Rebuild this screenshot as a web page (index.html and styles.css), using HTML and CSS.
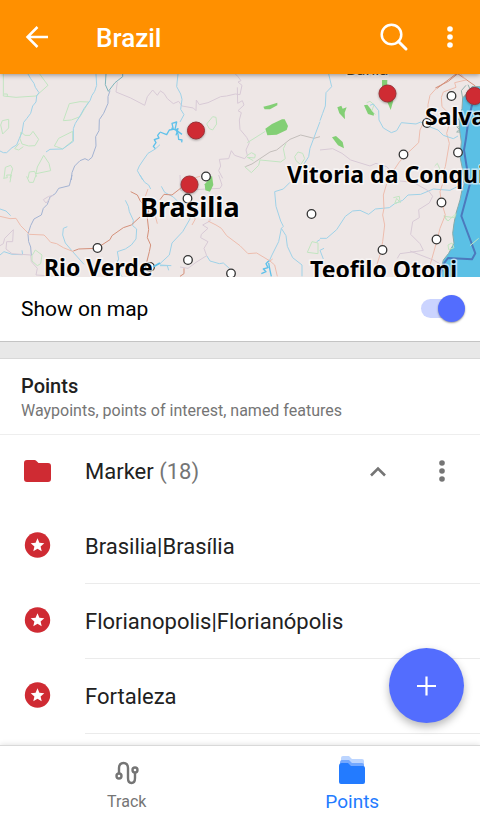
FILE: index.html
```html
<!DOCTYPE html>
<html lang="en">
<head>
<meta charset="utf-8">
<meta name="viewport" content="width=device-width, initial-scale=1">
<title>Brazil</title>
<link rel="stylesheet" href="styles.css">
</head>
<body>
<header class="appbar">
  <button class="icon-button" aria-label="Back">
    <svg width="24" height="24" viewBox="0 0 24 24" fill="none" stroke="currentColor" stroke-width="2.500"><path d="M23 12H3M12.500 2L2.500 12l10 10"/></svg>
  </button>
  <h1 class="title">Brazil</h1>
  <button class="icon-button" aria-label="Search">
    <svg width="30" height="30" viewBox="0 0 30 30" fill="none" stroke="currentColor" stroke-width="2.500"><circle cx="12.500" cy="12.500" r="9.800"/><path d="M19.500 19.500l7.500 7.500" stroke-width="3" stroke-linecap="round"/></svg>
  </button>
  <button class="icon-button" aria-label="More options">
    <svg width="8" height="24" viewBox="0 0 8 24" fill="currentColor"><circle cx="4" cy="4" r="2.800"/><circle cx="4" cy="12" r="2.800"/><circle cx="4" cy="20" r="2.800"/></svg>
  </button>
</header>
<main class="content">
  <div class="map">
    <svg class="map-canvas" viewBox="0 74 480 203" preserveAspectRatio="xMidYMid slice" role="img" aria-label="Map of Brazil">
      <g transform="translate(0 70) scale(.33333)" class="lines">
        <path class="park" d="M10 12V78L48 82 108 78 144 46 119 12M12 72H22V80M190 152L208 101 240 95 266 96 240 140 214 150ZM163 228L176 205 218 184V212L188 237 170 230ZM2 165L7 152 26 148V174L8 192ZM63 186L75 196 90 196 99 184 116 208 105 227 86 228 66 222 60 206ZM131 256L147 280 152 302 108 311 112 291ZM12 325L16 292 32 286 38 296 30 325M84 325L88 306 104 304 110 320M58 220L44 236 56 240 70 230"/>
        <path class="river" d="M84 12L92 26 102 40 106 52 117 68 110 78 108 96 98 108 92 130 80 146 71 157 66 188 58 205 50 225 36 233 20 248 10 248 0 243M288 12L290 46 284 64 276 76 270 92 252 116 240 138 226 160 220 176V214L188 237 150 238 138 246M480 224L466 237 444 250 430 270 418 288 412 302 428 330"/>
        <path class="lake" d="M480 187L473 196 477 204 463 209 468 218 460 229 466 236"/>
        <path class="river dark" d="M318 12L316 44 325 64 345 38 368 20V12"/>
        <path class="border-river" d="M330 62L324 80V100L311 130 298 149 297 182 287 200 288 228 276 262 265 271 255 266 240 272 224 288 216 308 214 330"/>
        <path class="border" d="M352 36L348 66 392 84 434 106 442 80 458 60 472 76 480 64"/>
      </g>
      <g transform="translate(160 70) scale(.33333)" class="lines">
        <path class="border" d="M0 62L12 70 22 86 40 101 56 94 66 108 100 114 108 122 109 90 118 104 144 98 182 80 200 78 226 72 240 74 246 46 234 36 243 32 234 20 226 12M232 52L233 100 247 92 252 105 234 122 244 128 238 150 240 178 260 202 268 218 258 240 262 256 254 266 224 256 214 242 206 266 178 268 182 288 176 302 188 325"/>
        <path class="border green-gray" d="M256 290L276 282 330 246 350 240 390 208 422 195 462 205 480 200"/>
        <path class="park" d="M140 162L158 140 168 142 170 162 158 180 148 176ZM316 184L262 218M378 220L370 236 376 266 362 276 300 270 296 286 274 308 254 290M404 260L414 246 428 250 434 266 422 284 408 272ZM260 258L274 248 286 254 284 264 262 262 280 272"/>
        <path class="river" d="M54 12L50 50 62 72 66 88 62 118 72 134 60 156M480 155L466 192 450 235 446 260 432 282"/>
        <path class="lake" d="M0 186L20 194 28 180 40 178 36 160 50 156 45 178 66 193M48 180L54 192 56 208 66 210 65 217M34 174L46 180 54 176 48 196"/>
        <path class="wood" d="M310 110L328 106 352 98V106L330 118H314ZM316 176L336 162 366 148 374 148 384 168 380 180 350 194 322 196Z"/>
      </g>
      <g transform="translate(320 70) scale(.33333)" class="lines">
        <path class="sea" d="M490 50L456 50 442 72 428 84 426 116 418 140 418 174 424 216 420 260 428 300 432 345 426 360 420 390 414 410 408 430 402 460 398 490 402 520 386 550 370 570 354 630H490Z"/>
        <path class="coast" d="M456 104L445 152 438 205 432 240 440 290 449 345 424 438 466 550 456 568 384 564 372 580 360 615"/>
        <path class="hatch" d="M438 46L424 62 428 84 440 70M428 140L414 148 426 156M422 170H410L418 178 410 186H420M444 44L452 62"/>
        <path class="wood" d="M186 30H202L201 60 220 92 212 120 203 98 186 50ZM52 112L64 107 68 116 80 112 74 128 75 148 58 130ZM132 106L142 104 148 112 162 130 161 137 144 132ZM36 202L48 198 68 216 72 235 54 226Z"/>
        <path class="park" d="M140 98L150 94 162 104 156 122 166 134M344 288L352 280 360 298 348 300"/>
        <path class="road strong" d="M480 2L426 10 408 12 350 56M406 6L466 48M412 12L385 34 346 54"/>
        <path class="road" d="M348 56L330 76 324 104 324 130 300 180 296 218 260 252 238 276 222 300M422 12L438 30 404 38 408 52 370 66 364 82 366 110 382 126 390 156 380 190 388 220 376 290 372 300"/>
        <path class="river" d="M26 12L35 50 18 68 16 108 8 130 0 152M150 106L160 102 176 122 177 150 190 174 214 188 230 182 244 158 288 162 302 156 322 168 354 180 370 196 400 206 414 198"/>
        <path class="border" d="M0 240L38 236 66 250 92 270 150 288 168 280 200 290 220 310"/>
      </g>
      <g transform="translate(0 175) scale(.33333)" class="lines">
        <path class="border-river" d="M216 0L208 32 176 40 166 56 150 66 142 88 130 100 124 120 102 132 92 152 84 178 86 200 92 216 94 242"/>
        <path class="river" d="M0 102L18 108 32 122M0 240L12 230 36 238 68 239 66 226M202 155L190 160 188 180 196 204 218 230 252 268M420 0L434 22 446 30 452 42M376 76L385 94 388 110 400 136 398 152 410 162 408 192 394 210 376 222 352 230 356 252 348 270 366 305"/>
        <path class="road" d="M0 124L30 131 48 130 62 152 88 178 132 180 138 186 152 202 170 206 190 218 220 230"/>
        <path class="road strong" d="M220 228L236 222 290 220 330 194 336 182 370 158 394 150 420 126M392 50L412 60 422 80 446 104 442 130 446 164 442 188 452 210 448 230 440 262"/>
        <path class="road" d="M444 42L436 64M464 116L472 146"/>
        <path class="border" d="M0 212L10 206 14 190 40 164 38 200 20 200 18 222 36 236 92 240 94 260 112 280 108 300 140 302M160 62L146 64 130 74 138 84 150 70"/>
        <path class="park" d="M10 10L22 8 20 0H34L30 22M80 4L88 22H100L108 0M96 242L106 225 126 240 122 266 112 272 96 258Z"/>
      </g>
      <g transform="translate(160 175) scale(.33333)" class="lines">
        <path class="river" d="M4 34L14 52 40 66 66 92M90 112V132L68 170 36 204 28 240 0 266M390 22L370 42 344 50 348 94 362 138 370 154 364 160 356 200 336 240 326 262M364 160L378 182 382 214 398 248 426 270V304M140 242L150 258 178 266 190 264 208 280M0 272H22L26 286M470 200L480 194"/>
        <path class="lake" d="M328 256L318 266 324 278 310 282 318 290 304 296M326 264L330 286 334 304"/>
        <path class="river" d="M0 270L34 272"/>
        <path class="border" d="M60 0L62 46 180 40 186 30 176 0M150 90V138L128 150 144 160 124 178 122 188 144 200 132 220 140 242 108 262 84 280 60 276"/>
        <path class="road" d="M144 138L168 150 184 160 200 182 240 212 264 236 290 234 330 258 344 270 352 304M84 14L120 4M330 258L338 252M110 104L100 124 106 132 96 150"/>
        <path class="road strong" d="M0 74L12 58 36 60 64 38M60 304L72 296V280"/>
        <path class="wood" d="M156 2L160 30 150 50 136 46 134 28Z"/>
        <path class="park" d="M442 232L456 200 474 204V236Z"/>
      </g>
      <g transform="translate(320 175) scale(.33333)" class="lines">
        <path class="river" d="M0 190L20 190 50 164 76 124 98 108 120 106 146 118 166 102 208 98 224 86 248 76 264 60 302 58 340 42 390 46 434 24M12 220L0 226 10 252"/>
        <path class="border" d="M240 18L280 22 326 48 338 64 328 84 296 104 298 128 278 140 272 178 300 206 310 226 270 232 240 236 232 250M270 228L340 255 366 270"/>
        <path class="park" d="M220 68L238 64 240 80 224 86 230 70 242 84M372 124L404 128 408 116 384 138ZM384 210L396 204 402 218 386 224ZM450 212L476 190M380 136L372 120"/>
        <path class="road" d="M200 26L190 60 192 100 188 120 194 150 188 200 180 240 164 290M370 20L360 50 364 80 376 120 360 160 350 200 336 250 330 270M390 0L374 28"/>
      </g>
      <g class="town">
        <circle cx="451.500" cy="96" r="4.300"/><circle cx="427" cy="123" r="4.300"/><circle cx="403.500" cy="154.500" r="4.300"/><circle cx="458" cy="152.500" r="4.300"/><circle cx="206" cy="176.500" r="4.300"/><circle cx="187.500" cy="198.500" r="4.300"/><circle cx="97.500" cy="248" r="4.300"/><circle cx="188" cy="260" r="4.300"/><circle cx="231" cy="273.500" r="4.300"/><circle cx="311.500" cy="214" r="4.300"/><circle cx="441.500" cy="202.500" r="4.300"/><circle cx="436.500" cy="239.500" r="4.300"/><circle cx="382.500" cy="250" r="4.300"/><circle cx="150" cy="267" r="4.300"/>
      </g>
      <path class="lake" fill="none" d="M153 267l7-4"/>
      <g class="pin">
        <circle cx="196" cy="130.500" r="8.500"/><circle cx="189.500" cy="184.500" r="8.500"/><circle cx="387.500" cy="93.500" r="8.500"/><circle cx="474.500" cy="96" r="8.500"/>
      </g>
      <text class="region" x="346" y="75">Bahia</text>
      <g class="city">
        <text x="425" y="125">Salvador</text>
        <text x="287" y="183">Vitoria da Conquista</text>
        <text class="capital" x="140" y="217">Brasilia</text>
        <text x="44" y="276">Rio Verde</text>
        <text x="310" y="278">Teofilo Otoni</text>
      </g>
    </svg>
  </div>
  <label class="toggle-row">
    <span>Show on map</span>
    <input class="switch" type="checkbox" role="switch" checked>
  </label>
  <section class="points">
    <div class="points-head">
      <h2 class="points-title">Points</h2>
      <p class="points-note">Waypoints, points of interest, named features</p>
    </div>
    <div class="group">
      <svg class="lead" width="27" height="22" viewBox="0 0 27 22" fill="#cf2b33"><path d="M3 0h7.500q1 0 1.700.7L14.500 3H24q3 0 3 3v13q0 3-3 3H3q-3 0-3-3V3q0-3 3-3z"/></svg>
      <span class="group-name">Marker <span class="count">(18)</span></span>
      <button class="group-button" aria-label="Collapse">
        <svg width="18" height="12" viewBox="0 0 18 12" fill="none" stroke="currentColor" stroke-width="2.600"><path d="M2 10.500l7-7 7 7"/></svg>
      </button>
      <button class="group-button" aria-label="Group options">
        <svg width="8" height="24" viewBox="0 0 8 24" fill="currentColor"><circle cx="4" cy="4" r="2.800"/><circle cx="4" cy="12" r="2.800"/><circle cx="4" cy="20" r="2.800"/></svg>
      </button>
    </div>
    <ul class="list">
      <li class="item">
        <svg class="lead" width="27" height="26" viewBox="0 0 27 26"><circle cx="13.500" cy="13" r="12.700" fill="#cf2b33"/><path fill="#fff" d="M13.500 6.200l1.900 4.600 4.900.4-3.700 3.200 1.100 4.800-4.200-2.500-4.200 2.500 1.100-4.800-3.700-3.200 4.900-.4z"/></svg>
        <span class="item-name">Brasilia|Brasília</span>
      </li>
      <li class="item">
        <svg class="lead" width="27" height="26" viewBox="0 0 27 26"><circle cx="13.500" cy="13" r="12.700" fill="#cf2b33"/><path fill="#fff" d="M13.500 6.200l1.900 4.600 4.900.4-3.700 3.200 1.100 4.800-4.200-2.500-4.200 2.500 1.100-4.800-3.700-3.200 4.900-.4z"/></svg>
        <span class="item-name">Florianopolis|Florianópolis</span>
      </li>
      <li class="item">
        <svg class="lead" width="27" height="26" viewBox="0 0 27 26"><circle cx="13.500" cy="13" r="12.700" fill="#cf2b33"/><path fill="#fff" d="M13.500 6.200l1.900 4.600 4.900.4-3.700 3.200 1.100 4.800-4.200-2.500-4.200 2.500 1.100-4.800-3.700-3.200 4.900-.4z"/></svg>
        <span class="item-name">Fortaleza</span>
      </li>
    </ul>
  </section>
  <button class="fab" aria-label="Add point">
    <svg width="20" height="20" viewBox="0 0 20 20" fill="none" stroke="currentColor" stroke-width="2.200"><path d="M9.500 .5v19M0 10h19"/></svg>
  </button>
</main>
<nav class="tabs">
  <a class="tab" href="#track">
    <svg width="24" height="24" viewBox="0 0 24 24" fill="none" stroke="currentColor" stroke-width="2.400"><path d="M4 12V7q0-5 4.500-5T13 7v10q0 5 3.500 5t3.500-5v-6"/><circle cx="4" cy="15" r="2.500"/><circle cx="20" cy="9" r="2.500"/></svg>
    <span>Track</span>
  </a>
  <a class="tab active" href="#points" aria-current="page">
    <svg width="28" height="30" viewBox="0 0 28 30"><path fill="#bcd5ff" d="M3 3q0-2 2-2h6l3 3h10q2 0 2 2v8H3z"/><path fill="#73a8ff" d="M2 8q0-3 2-3h7l3 3h10q2 0 2 2v6H2z"/><path fill="#237bff" d="M1 11q0-3 3-3h6l3 3h12q2 0 2 2v14q0 2-2 2H3q-2 0-2-2z"/></svg>
    <span>Points</span>
  </a>
</nav>
</body>
</html>
```
FILE: styles.css
```css
* { box-sizing: border-box; }

body {
  margin: 0;
  height: 100vh;
  display: flex;
  flex-direction: column;
  overflow: hidden;
  background: #fff;
  color: #212121;
  font-family: Roboto, "Liberation Sans", sans-serif;
  font-size: 22px;
}

h1, h2, p, ul { margin: 0; padding: 0; }

button {
  display: grid;
  place-items: center;
  padding: 0;
  border: 0;
  background: none;
  color: inherit;
}

.appbar {
  flex: none;
  position: relative;
  z-index: 1;
  display: flex;
  align-items: center;
  height: 74px;
  padding: 0 2px 0 9px;
  background: #ff9000;
  color: #fff;
  box-shadow: 0 1px 5px rgba(0, 0, 0, .4);
}

.icon-button { width: 56px; height: 56px; }
.appbar .title {
  flex: 1;
  padding: 2px 0 0 31px;
  font-size: 26px;
  font-weight: 500;
  line-height: 32px;
}

.content {
  position: relative;
  flex: 1;
  min-height: 0;
  display: flex;
  flex-direction: column;
}

.map { flex: none; height: 203px; background: #eee7e6; }
.map-canvas { display: block; width: 100%; height: 100%; }

.lines { fill: none; stroke-width: 3; stroke-linejoin: round; }
.river { stroke: #9fd2e8; }
.dark { stroke: #80b4bb; }
.border-river { stroke: #a3b3d2; }
.border { stroke: #d8cad6; }
.green-gray { stroke: #c3bebb; }
.park { stroke: #c2e5c1; }
.lake { stroke: #5fc1ea; stroke-width: 4; }
.map-canvas > .lake { stroke-width: 2; }
.road { stroke: #edbdae; }
.strong { stroke: #d49079; }
.wood { fill: #83cf75; }
.sea { fill: #5bc0e5; stroke: #88aaa8; }
.coast { stroke: #4c79bd; stroke-width: 6; }
.hatch { stroke: #94b1ad; }
.town { fill: #fff; stroke: #333; stroke-width: 1.3; }
.pin { fill: #cf2b33; stroke: #9c3036; stroke-width: 1; filter: drop-shadow(0 1px 1px rgba(0, 0, 0, .3)); }

.city, .region {
  font-family: "Noto Sans", "Open Sans", sans-serif;
  paint-order: stroke;
  stroke: #fff;
  stroke-opacity: .6;
  stroke-width: 3;
}
.city { font-size: 23px; font-weight: 700; fill: #000; }
.capital { font-size: 27px; }
.region { font-size: 16px; fill: #444; }

.toggle-row {
  flex: none;
  display: flex;
  align-items: center;
  justify-content: space-between;
  height: 65px;
  padding: 0 15px 0 21px;
  border-bottom: 1px solid #c4c4c4;
  color: #000;
  font-size: 21px;
}

.switch {
  appearance: none;
  position: relative;
  width: 44px;
  height: 27px;
  margin: 0 0 2px;
}
.switch::before {
  content: "";
  position: absolute;
  inset: 4px 2px 4px 0;
  border-radius: 10px;
  background: #cbd4ff;
}
.switch::after {
  content: "";
  position: absolute;
  top: 0;
  right: 0;
  width: 27px;
  height: 27px;
  border-radius: 50%;
  background: #536dfe;
  box-shadow: 0 1px 2px rgba(0, 0, 0, .4);
}

.points { border-top: 16px solid #e8e8e8; }
.points-head {
  height: 77px;
  padding: 14px 21px 0;
  border-top: 1px solid #d8d8d8;
  border-bottom: 1px solid #eee;
}
.points-title { font-size: 20px; font-weight: 500; line-height: 26px; }
.points-note { font-size: 16px; line-height: 24px; color: #757575; }

.group { display: flex; align-items: center; height: 74px; padding: 0 6px 2px 24px; }
.lead { flex: none; margin-right: 34px; }
.group-name { flex: 1; }
.count { color: #757575; }
.group-button { width: 64px; height: 64px; color: #757575; }

.list { list-style: none; }
.item { display: flex; align-items: center; height: 75px; padding-left: 24px; }
.item .lead { margin-bottom: 4px; }
.item-name {
  flex: 1;
  height: 75px;
  border-bottom: 1px solid #ebebeb;
  line-height: 75px;
}

.fab {
  position: absolute;
  right: 16px;
  bottom: 22px;
  width: 75px;
  height: 75px;
  border-radius: 50%;
  background: #536dfe;
  color: #fff;
  box-shadow: 0 4px 8px rgba(0, 0, 0, .28);
}

.tabs {
  flex: none;
  position: relative;
  display: flex;
  height: 76px;
  padding: 0 15px 0 14px;
  border-top: 1px solid #d9d9d9;
  background: #fff;
  box-shadow: 0 -1px 5px rgba(0, 0, 0, .1);
}
.tab {
  flex: 1;
  display: flex;
  flex-direction: column;
  align-items: center;
  justify-content: flex-end;
  gap: 6px;
  padding-bottom: 8px;
  color: #757575;
  font-size: 16px;
  line-height: 22px;
  text-decoration: none;
}
.active { color: #237bff; font-size: 19px; }
```
